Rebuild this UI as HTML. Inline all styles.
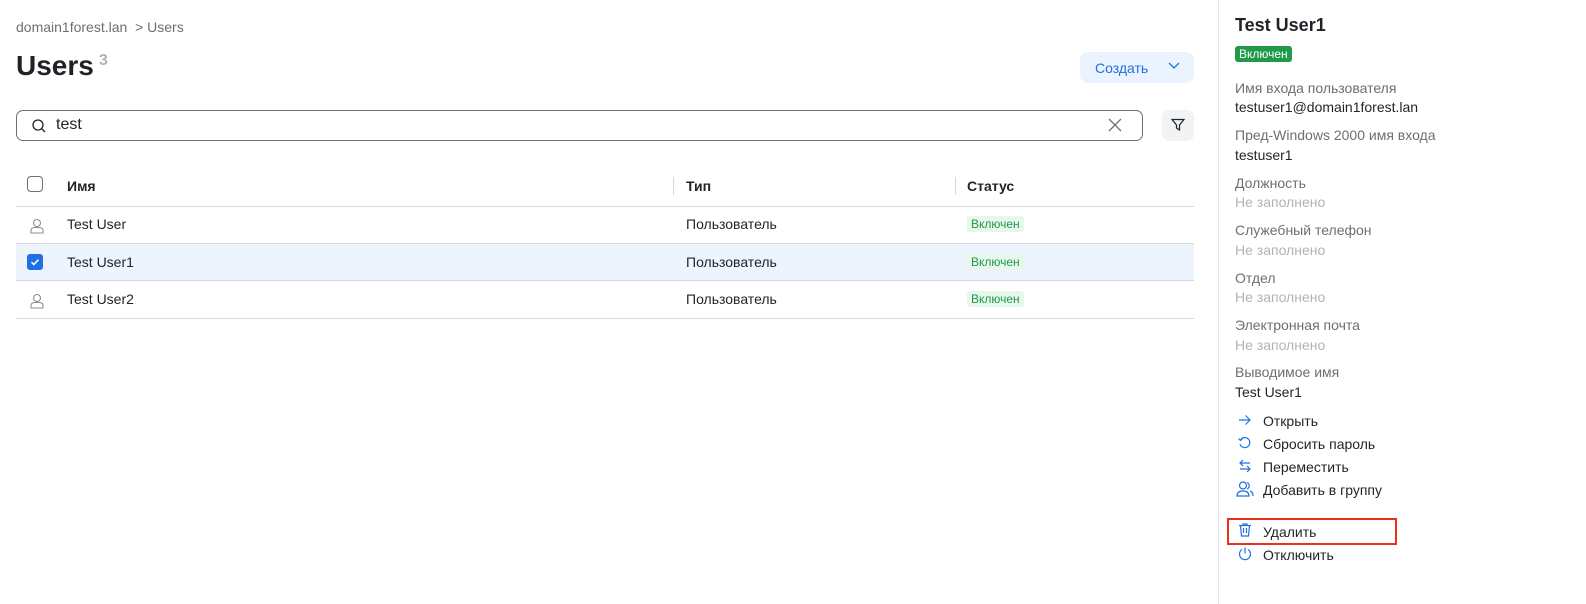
<!DOCTYPE html>
<html><head><meta charset="utf-8"><style>
*{box-sizing:border-box;margin:0;padding:0}
body{width:1586px;height:604px;background:#fff;font-family:"Liberation Sans",sans-serif;color:#1f2328;position:relative;overflow:hidden;font-size:14px}
.a{position:absolute;white-space:nowrap}
.crumb{color:#6b6f76;font-size:14px}
.badge{background:#e8f7ec;color:#1f9a48;font-size:12px;padding:1px 4px;border-radius:3px}
.row{position:absolute;left:16px;width:1178px;height:37px;border-bottom:1px solid #d6d8dc}
.lbl{color:#6b6f76;font-size:14px}
.val{color:#1f2328;font-size:14px}
.ph{color:#b0b4ba;font-size:14px}
.act{font-size:14px;color:#1f2328}
</style></head><body>
<div class="a crumb" style="left:16px;top:19px">domain1forest.lan &nbsp;&gt; Users</div>
<div class="a" style="left:16px;top:50px;font-size:28px;font-weight:bold">Users</div>
<div class="a" style="left:99px;top:52px;font-size:16px;color:#b0b4ba;font-weight:bold">3</div>
<div class="a" style="left:1080px;top:52px;width:114px;height:31px;background:#eaf3fe;border-radius:8px;color:#1f6fe5;font-size:14px;padding:8px 0 0 15px">Создать
<svg style="position:absolute;left:88px;top:10px" width="12" height="8" viewBox="0 0 12 8"><path d="M1 1l5 5 5-5" fill="none" stroke="#1f6fe5" stroke-width="1.3"/></svg></div>
<div class="a" style="left:16px;top:110px;width:1127px;height:31px;border:1px solid #6b6f76;border-radius:7px"></div>
<svg class="a" style="left:31px;top:118px" width="16" height="16" viewBox="0 0 16 16"><circle cx="7" cy="7" r="5" fill="none" stroke="#1f2328" stroke-width="1.3"/><path d="M11 11l3 3" stroke="#1f2328" stroke-width="1.3"/></svg>
<div class="a" style="left:56px;top:116px;font-size:16px">test</div>
<svg class="a" style="left:1107px;top:117px" width="16" height="16" viewBox="0 0 16 16"><path d="M2 2l12 12M14 2L2 14" stroke="#6b6f76" stroke-width="1.3"/></svg>
<div class="a" style="left:1162px;top:110px;width:32px;height:31px;background:#f2f3f5;border-radius:7px"></div>
<svg class="a" style="left:1171px;top:118px" width="14" height="14" viewBox="0 0 14 14"><path d="M1 1.5h12L8.5 7v5L5.5 10V7z" fill="none" stroke="#1f2328" stroke-width="1.2"/></svg>
<div class="row" style="top:169px;height:38px"></div>
<div class="a" style="left:27px;top:176px;width:16px;height:16px;border:1px solid #6b6f76;border-radius:4px"></div>
<div class="a" style="left:67px;top:178px;font-weight:bold">Имя</div>
<div class="a" style="left:673px;top:177px;width:1px;height:18px;background:#d6d8dc"></div>
<div class="a" style="left:686px;top:178px;font-weight:bold">Тип</div>
<div class="a" style="left:955px;top:177px;width:1px;height:18px;background:#d6d8dc"></div>
<div class="a" style="left:967px;top:178px;font-weight:bold">Статус</div>

<div class="row" style="top:207px"></div>
<div class="row" style="top:244px;background:#edf4fd"></div>
<div class="row" style="top:282px"></div>
<svg class="a" style="left:29px;top:217px" width="16" height="18" viewBox="0 0 16 18"><circle cx="8" cy="6" r="3.5" fill="none" stroke="#8a8e94" stroke-width="1.1"/><path d="M2 16v-2.5q0-2.5 3-3h6q3 .5 3 3V16z" fill="none" stroke="#8a8e94" stroke-width="1.1"/></svg>
<svg class="a" style="left:29px;top:292px" width="16" height="18" viewBox="0 0 16 18"><circle cx="8" cy="6" r="3.5" fill="none" stroke="#8a8e94" stroke-width="1.1"/><path d="M2 16v-2.5q0-2.5 3-3h6q3 .5 3 3V16z" fill="none" stroke="#8a8e94" stroke-width="1.1"/></svg>
<div class="a" style="left:27px;top:254px;width:16px;height:16px;background:#1f6fe5;border-radius:3px"></div>
<svg class="a" style="left:27px;top:254px" width="16" height="16" viewBox="0 0 16 16"><path d="M4.5 8.2l2.3 2.3 4.7-4.8" fill="none" stroke="#fff" stroke-width="1.6"/></svg>
<div class="a" style="left:67px;top:216px">Test User</div>
<div class="a" style="left:67px;top:254px">Test User1</div>
<div class="a" style="left:67px;top:291px">Test User2</div>
<div class="a" style="left:686px;top:216px">Пользователь</div>
<div class="a" style="left:686px;top:254px">Пользователь</div>
<div class="a" style="left:686px;top:291px">Пользователь</div>
<div class="a badge" style="left:967px;top:216px">Включен</div>
<div class="a badge" style="left:967px;top:254px">Включен</div>
<div class="a badge" style="left:967px;top:291px">Включен</div>

<div class="a" style="left:1218px;top:0;width:1px;height:604px;background:#e6e7ea"></div>
<div class="a" style="left:1235px;top:15px;font-size:18px;font-weight:bold">Test User1</div>
<div class="a" style="left:1235px;top:46px;background:#1f9a48;color:#fff;font-size:12px;padding:1px 4px;border-radius:3px">Включен</div>
<div class="a lbl" style="left:1235px;top:80px">Имя входа пользователя</div>
<div class="a val" style="left:1235px;top:99px">testuser1@domain1forest.lan</div>
<div class="a lbl" style="left:1235px;top:127px">Пред-Windows 2000 имя входа</div>
<div class="a val" style="left:1235px;top:147px">testuser1</div>
<div class="a lbl" style="left:1235px;top:175px">Должность</div>
<div class="a ph" style="left:1235px;top:194px">Не заполнено</div>
<div class="a lbl" style="left:1235px;top:222px">Служебный телефон</div>
<div class="a ph" style="left:1235px;top:242px">Не заполнено</div>
<div class="a lbl" style="left:1235px;top:270px">Отдел</div>
<div class="a ph" style="left:1235px;top:289px">Не заполнено</div>
<div class="a lbl" style="left:1235px;top:317px">Электронная почта</div>
<div class="a ph" style="left:1235px;top:337px">Не заполнено</div>
<div class="a lbl" style="left:1235px;top:364px">Выводимое имя</div>
<div class="a val" style="left:1235px;top:384px">Test User1</div>

<svg class="a" style="left:1237px;top:413px" width="16" height="14" viewBox="0 0 16 14"><path d="M2 7h11M8.5 2.5L13 7l-4.5 4.5" fill="none" stroke="#1f6fe5" stroke-width="1.2"/></svg>
<div class="a act" style="left:1263px;top:413px">Открыть</div>
<svg class="a" style="left:1237px;top:435px" width="16" height="16" viewBox="0 0 16 16"><path d="M3.5 5A5 5 0 1 1 3 9" fill="none" stroke="#1f6fe5" stroke-width="1.2"/><path d="M1.5 3.5L3.5 5.5 5.5 3.5" fill="none" stroke="#1f6fe5" stroke-width="1.2"/></svg>
<div class="a act" style="left:1263px;top:436px">Сбросить пароль</div>
<svg class="a" style="left:1237px;top:458px" width="16" height="16" viewBox="0 0 16 16"><path d="M3 5h10M6 2L3 5l3 3M13 11H3M10 8l3 3-3 3" fill="none" stroke="#1f6fe5" stroke-width="1.2"/></svg>
<div class="a act" style="left:1263px;top:459px">Переместить</div>
<svg class="a" style="left:1236px;top:480px" width="18" height="18" viewBox="0 0 18 18"><circle cx="7" cy="5.5" r="3.5" fill="none" stroke="#1f6fe5" stroke-width="1.2"/><path d="M1 16q0-5 6-5t6 5zM11 2.5a3.5 3.5 0 0 1 0 6.5M14 11q3 1 3 5" fill="none" stroke="#1f6fe5" stroke-width="1.2"/></svg>
<div class="a act" style="left:1263px;top:482px">Добавить в группу</div>

<div class="a" style="left:1227px;top:518px;width:170px;height:27px;border:2px solid #e8321f"></div>
<svg class="a" style="left:1237px;top:522px" width="16" height="16" viewBox="0 0 16 16"><path d="M2 3.5h12M6 3.5V2h4v1.5M3.5 3.5l1 10.5h7l1-10.5M6.5 6v5M9.5 6v5" fill="none" stroke="#1f6fe5" stroke-width="1.2"/></svg>
<div class="a act" style="left:1263px;top:524px">Удалить</div>
<svg class="a" style="left:1237px;top:546px" width="16" height="16" viewBox="0 0 16 16"><path d="M5 3.5a5.5 5.5 0 1 0 6 0M8 1.5v6" fill="none" stroke="#1f6fe5" stroke-width="1.2"/></svg>
<div class="a act" style="left:1263px;top:547px">Отключить</div>
</body></html>
